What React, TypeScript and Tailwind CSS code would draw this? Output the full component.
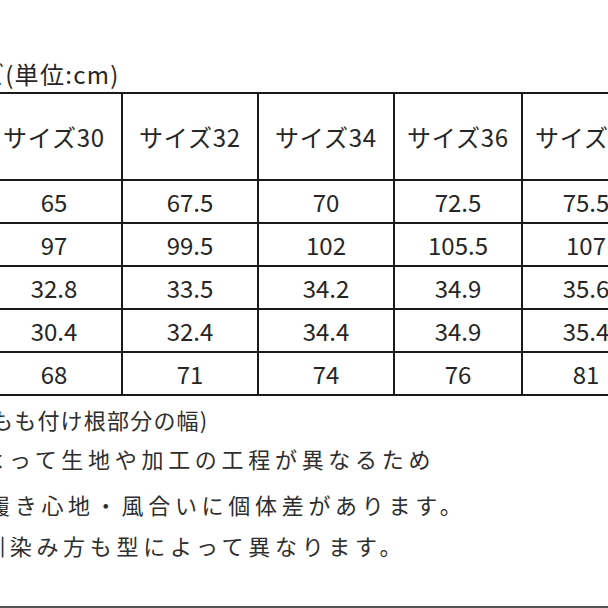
import React from "react";

const headers = ["サイズ30", "サイズ32", "サイズ34", "サイズ36", "サイズ38"];

const rows = [
  ["65", "67.5", "70", "72.5", "75.5"],
  ["97", "99.5", "102", "105.5", "107"],
  ["32.8", "33.5", "34.2", "34.9", "35.6"],
  ["30.4", "32.4", "34.4", "34.9", "35.4"],
  ["68", "71", "74", "76", "81"],
];

const font = { fontFamily: '"Noto Sans CJK JP", "Noto Sans", sans-serif' };

export default function App() {
  return (
    <div
      className="w-[608px] h-[608px] overflow-hidden bg-white text-[#262626] flex flex-col"
      style={font}
    >
      {/* unit label */}
      <div className="mt-[58px] ml-[-70px] h-[32px] leading-[32px] text-[24px] tracking-[1.3px] whitespace-nowrap">
        サイズ(単位:cm)
      </div>

      {/* size table */}
      <div className="mt-[2px] ml-[-15px] grid grid-cols-[136px_136px_136px_128px_128px] w-max border-t-2 border-l-2 border-[#1a1a1a]">
        {headers.map((h) => (
          <div
            key={h}
            className="h-[87px] flex items-center justify-center border-r-2 border-b-2 border-[#1a1a1a] text-[24px] tracking-[0.8px] whitespace-nowrap"
          >
            {h}
          </div>
        ))}
        {rows.map((row, i) =>
          row.map((v, j) => (
            <div
              key={i + "-" + j}
              className="h-[43px] flex items-center justify-center border-r-2 border-b-2 border-[#1a1a1a] text-[24px]"
            >
              {v}
            </div>
          ))
        )}
      </div>

      {/* notes */}
      <div className="mt-[8px] ml-[-9px] h-[30px] leading-[30px] text-[22px] tracking-[1.2px] whitespace-nowrap text-[#2e2e2e]">
        もも付け根部分の幅)
      </div>
      <div className="mt-[9px] ml-[-17px] h-[30px] leading-[30px] text-[22px] tracking-[4.7px] whitespace-nowrap text-[#2e2e2e]">
        よって生地や加工の工程が異なるため
      </div>
      <div className="mt-[16px] ml-[-12px] h-[30px] leading-[30px] text-[22px] tracking-[4.7px] whitespace-nowrap text-[#2e2e2e]">
        履き心地・風合いに個体差があります。
      </div>
      <div className="mt-[11px] ml-[-17px] h-[30px] leading-[30px] text-[22px] tracking-[4.7px] whitespace-nowrap text-[#2e2e2e]">
        馴染み方も型によって異なります。
      </div>

      <div className="mt-auto h-[2px] bg-[#555555]" />
    </div>
  );
}
